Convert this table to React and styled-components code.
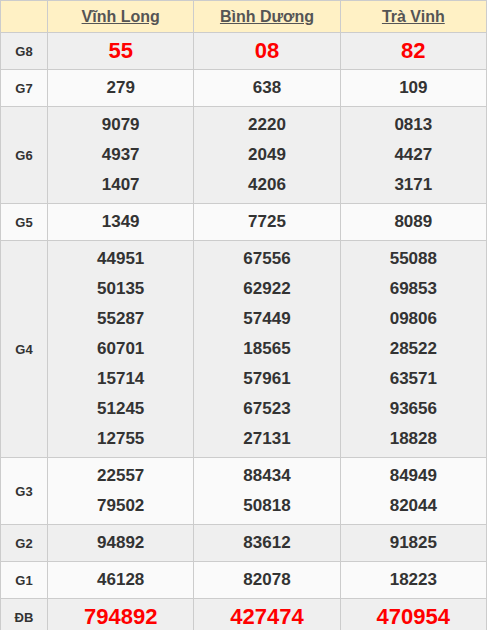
import styled, { createGlobalStyle } from "styled-components";

const GlobalStyle = createGlobalStyle`
  body {
    margin: 0;
    background: #fff;
    font-family: "Liberation Sans", Arial, sans-serif;
  }
`;

const Table = styled.table`
  width: 487px;
  border-collapse: collapse;
  table-layout: fixed;
  border: 1px solid #ccc;
`;

const Row = styled.tr`
  background: ${(p) => (p.$shade ? "#efefef" : "#fafafa")};
`;

const HeadRow = styled.tr`
  background: #fff1c5;
  height: 32px;
`;

const HeadCell = styled.th`
  border: 1px solid #ccc;
  padding: 0;
  text-align: center;
  font-size: 16px;
  font-weight: bold;
  color: #555;
`;

const HeadLink = styled.a`
  color: #555;
  text-decoration: underline;
`;

const Label = styled.td`
  width: 46px;
  border: 1px solid #ccc;
  padding: 0;
  text-align: center;
  font-size: 13px;
  font-weight: bold;
  color: #333;
`;

const Cell = styled.td`
  border: 1px solid #ccc;
  padding: 3px 0;
  text-align: center;
  vertical-align: middle;
`;

const Num = styled.div`
  line-height: 30px;
  font-size: ${(p) => (p.$big ? "22px" : "17px")};
  font-weight: bold;
  color: ${(p) => (p.$big ? "#f00" : "#333")};
`;

const provinces = ["Vĩnh Long", "Bình Dương", "Trà Vinh"];

const rows = [
  { label: "G8", big: true, data: [["55"], ["08"], ["82"]] },
  { label: "G7", data: [["279"], ["638"], ["109"]] },
  {
    label: "G6",
    data: [
      ["9079", "4937", "1407"],
      ["2220", "2049", "4206"],
      ["0813", "4427", "3171"],
    ],
  },
  { label: "G5", data: [["1349"], ["7725"], ["8089"]] },
  {
    label: "G4",
    data: [
      ["44951", "50135", "55287", "60701", "15714", "51245", "12755"],
      ["67556", "62922", "57449", "18565", "57961", "67523", "27131"],
      ["55088", "69853", "09806", "28522", "63571", "93656", "18828"],
    ],
  },
  {
    label: "G3",
    data: [
      ["22557", "79502"],
      ["88434", "50818"],
      ["84949", "82044"],
    ],
  },
  { label: "G2", data: [["94892"], ["83612"], ["91825"]] },
  { label: "G1", data: [["46128"], ["82078"], ["18223"]] },
  { label: "ĐB", big: true, data: [["794892"], ["427474"], ["470954"]] },
];

export default function App() {
  return (
    <>
      <GlobalStyle />
      <Table>
        <colgroup>
          <col style={{ width: 47 }} />
          <col />
          <col />
          <col />
        </colgroup>
        <thead>
          <HeadRow>
            <HeadCell />
            {provinces.map((p) => (
              <HeadCell key={p}>
                <HeadLink href="#">{p}</HeadLink>
              </HeadCell>
            ))}
          </HeadRow>
        </thead>
        <tbody>
          {rows.map((r, i) => (
            <Row key={r.label} $shade={i % 2 === 0}>
              <Label>{r.label}</Label>
              {r.data.map((col, j) => (
                <Cell key={j}>
                  {col.map((n, k) => (
                    <Num key={k} $big={r.big}>
                      {n}
                    </Num>
                  ))}
                </Cell>
              ))}
            </Row>
          ))}
        </tbody>
      </Table>
    </>
  );
}
